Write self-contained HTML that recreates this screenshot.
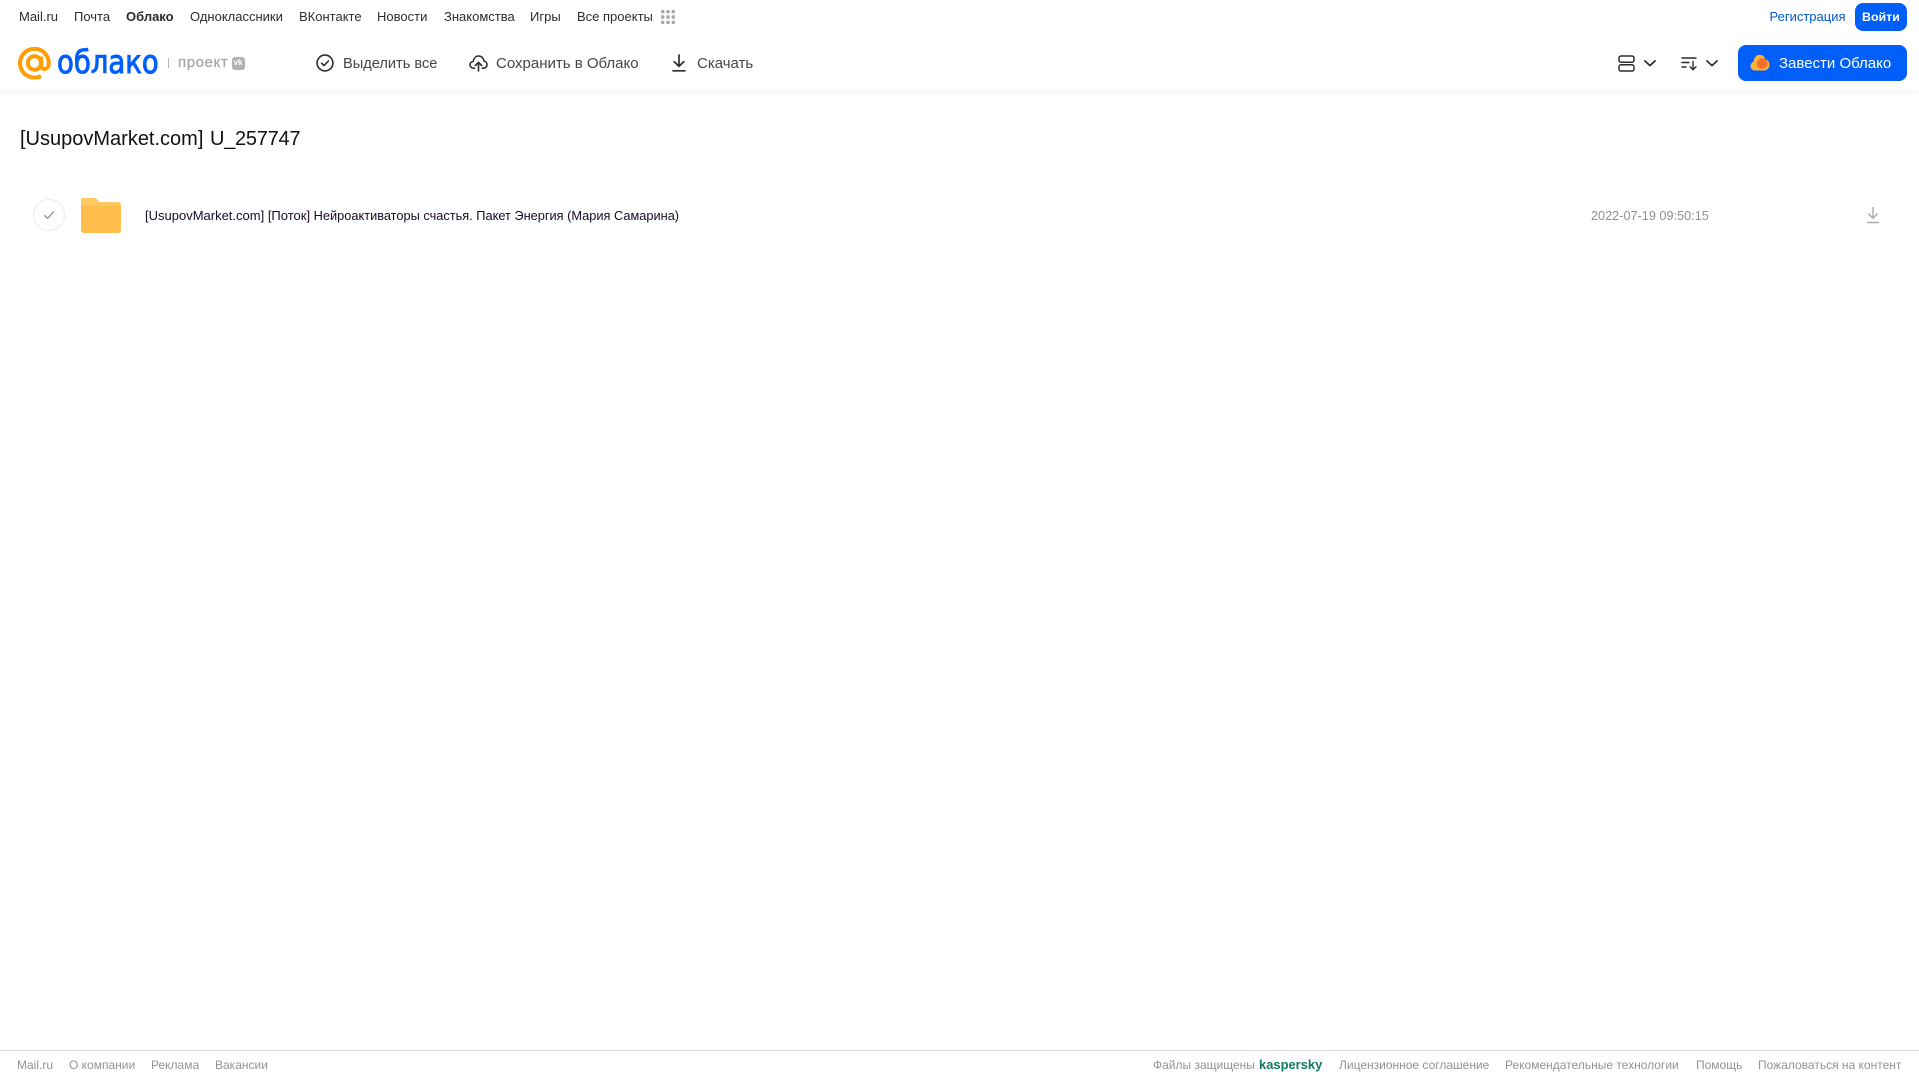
<!DOCTYPE html>
<html lang="ru">
<head>
<meta charset="utf-8">
<title>[UsupovMarket.com] U_257747</title>
<style>
html,body{margin:0;padding:0;background:#fff;width:1919px;height:1079px;overflow:hidden}
body{font-family:"Liberation Sans",Arial,sans-serif;position:relative}
.t{position:absolute;white-space:nowrap;line-height:20px}
.n{font-size:13px;color:#2c2d2e;top:7px}
.m{font-size:15px;color:#45464a;top:54px}
.f{font-size:12px;color:#919399;top:1055px}
svg{position:absolute;display:block}
#hd{position:absolute;left:0;top:0;width:1919px;height:90px;background:#fff;box-shadow:0 2px 6px rgba(0,0,0,.06)}
.btn{position:absolute;background:#005ff9;border-radius:8px}
</style>
</head>
<body>
<div id="hd"></div>

<span class="t n" style="left:19px">Mail.ru</span>
<span class="t n" style="left:74px">Почта</span>
<span class="t n" style="left:126px;font-weight:bold">Облако</span>
<span class="t n" style="left:190px">Одноклассники</span>
<span class="t n" style="left:299px">ВКонтакте</span>
<span class="t n" style="left:377px">Новости</span>
<span class="t n" style="left:444px">Знакомства</span>
<span class="t n" style="left:530px">Игры</span>
<span class="t n" style="left:577px">Все проекты</span>
<svg style="left:661px;top:10px" width="14" height="14" viewBox="0 0 14 14" fill="#a5a7ab">
<rect x="0" y="0" width="3.4" height="3.4" rx="1"/><rect x="5.3" y="0" width="3.4" height="3.4" rx="1"/><rect x="10.6" y="0" width="3.4" height="3.4" rx="1"/>
<rect x="0" y="5.3" width="3.4" height="3.4" rx="1"/><rect x="5.3" y="5.3" width="3.4" height="3.4" rx="1"/><rect x="10.6" y="5.3" width="3.4" height="3.4" rx="1"/>
<rect x="0" y="10.6" width="3.4" height="3.4" rx="1"/><rect x="5.3" y="10.6" width="3.4" height="3.4" rx="1"/><rect x="10.6" y="10.6" width="3.4" height="3.4" rx="1"/>
</svg>

<span class="t" style="left:1769.5px;top:7px;font-size:13px;color:#005bd1">Регистрация</span>
<div class="btn" style="left:1855px;top:3px;width:52px;height:28px"></div>
<span class="t" style="left:1862px;top:7px;font-size:12.4px;color:#fff;font-weight:bold">Войти</span>

<!-- logo -->
<svg style="left:18px;top:47px" width="33" height="33" viewBox="0 0 33 33" fill="none" stroke="#ff9e00" stroke-width="4">
<circle cx="16.5" cy="16" r="6.7"/>
<path d="M23.2 9.5V18.5c0 5 7.6 5 7.6-2.5A14.4 14.4 0 1 0 23 29"/>
</svg>
<span class="t" style="left:57px;top:45px;font-size:32px;line-height:34px;color:#005ff9;font-family:'DejaVu Sans',sans-serif;-webkit-text-stroke:1px #005ff9;transform-origin:0 50%;transform:scaleX(.86)">облако</span>
<div style="position:absolute;left:168px;top:58px;width:1px;height:10px;background:#b5b7bb"></div>
<span class="t" style="left:178px;top:53px;font-size:15px;color:#a5a7ab;-webkit-text-stroke:.3px #a5a7ab;letter-spacing:.6px">проект</span>
<div style="position:absolute;left:232px;top:57px;width:13px;height:13px;border-radius:3px;background:#b0b2b6"></div>
<span class="t" style="left:233.5px;top:53px;font-size:8px;color:#fff;font-weight:bold">vk</span>

<!-- action icons -->
<svg style="left:316px;top:54px" width="18" height="18" viewBox="0 0 18 18" fill="none" stroke="#2c2d2e" stroke-width="1.6">
<circle cx="9" cy="9" r="7.9"/><path d="M5.6 9.2l2.4 2.4 4.4-4.6" stroke-linecap="round" stroke-linejoin="round"/>
</svg>
<span class="t m" style="left:343px;font-size:14.6px">Выделить все</span>

<svg style="left:469px;top:54px" width="19" height="18" viewBox="0 0 19 18" fill="none" stroke="#2c2d2e" stroke-width="1.6" stroke-linecap="round" stroke-linejoin="round">
<path d="M5.5 14.2H4.6C2.6 14.2 1 12.7 1 10.8c0-1.8 1.4-3.2 3.2-3.4C4.8 4.2 6.9 2 9.6 2c2.8 0 5 2.1 5.3 4.9 1.8.4 3.1 1.9 3.1 3.7 0 2-1.6 3.6-3.6 3.6h-1"/>
<path d="M9.5 17V8.5M6.3 11.5l3.2-3.2 3.2 3.2"/>
</svg>
<span class="t m" style="left:496px">Сохранить в Облако</span>

<svg style="left:672px;top:54px" width="14" height="18" viewBox="0 0 14 18" fill="none" stroke="#2c2d2e" stroke-width="1.7" stroke-linecap="round" stroke-linejoin="round">
<path d="M7 1v11M2.2 7.6L7 12.4l4.8-4.8M1 16.8h12"/>
</svg>
<span class="t m" style="left:697px">Скачать</span>

<!-- view / sort -->
<svg style="left:1618px;top:55px" width="17" height="17" viewBox="0 0 17 17" fill="none" stroke="#2c2d2e" stroke-width="1.5">
<rect x="1" y="1" width="15" height="6.2" rx="2"/><rect x="1" y="9.8" width="15" height="6.2" rx="2"/>
</svg>
<svg style="left:1643px;top:59px" width="14" height="9" viewBox="0 0 14 9" fill="none" stroke="#2c2d2e" stroke-width="1.8" stroke-linecap="round" stroke-linejoin="round"><path d="M2 2l5 4.6L12 2"/></svg>
<svg style="left:1681px;top:56px" width="17" height="15" viewBox="0 0 17 15" fill="none" stroke="#2c2d2e" stroke-width="1.4" stroke-linecap="round" stroke-linejoin="round">
<path d="M1 2h14M1 6.5h7M1 11h4M12 5.5V13.5M9 10.8l3 3 3-3"/>
</svg>
<svg style="left:1705px;top:59px" width="14" height="9" viewBox="0 0 14 9" fill="none" stroke="#2c2d2e" stroke-width="1.8" stroke-linecap="round" stroke-linejoin="round"><path d="M2 2l5 4.6L12 2"/></svg>

<div class="btn" style="left:1738px;top:45px;width:169px;height:36px"></div>
<svg style="left:1750px;top:54px" width="20" height="17" viewBox="0 0 20 17">
<path d="M5 16.5C2.2 16.5 .5 14.5 .5 12c0-2 1.2-3.6 3-4.1C4 3.6 6.5 .8 9.5 .8c2.8 0 5 1.8 5.7 4.6 2.5.3 4.3 2.6 4.3 5.4 0 3.2-2.3 5.7-5.2 5.7z" fill="#ffb13b"/>
<circle cx="12.2" cy="9.6" r="5.3" fill="#f4702c"/>
</svg>
<span class="t" style="left:1779px;top:54px;font-size:15px;color:#fff">Завести Облако</span>

<!-- title -->
<span class="t" style="left:20px;top:125px;font-size:20px;line-height:28px;color:#111">[UsupovMarket.com] <span style="margin-left:1px;letter-spacing:-.25px">U_257747</span></span>

<!-- row -->
<div style="position:absolute;left:33px;top:199px;width:30px;height:30px;border:1px solid #ececee;border-radius:50%"></div>
<svg style="left:43px;top:210px" width="12" height="10" viewBox="0 0 12 10" fill="none" stroke="#8f9196" stroke-width="1.3" stroke-linecap="round" stroke-linejoin="round"><path d="M1.5 5.5L4.6 8.4 10.5 1.8"/></svg>
<svg style="left:81px;top:198px" width="40" height="35" viewBox="0 0 41 35" preserveAspectRatio="none">
<path d="M2 0h11c2 0 3 .8 4 2l1.8 2H38c1.700 0 3 1.300 3 3v25c0 1.700-1.300 3-3 3H3c-1.700 0-3-1.300-3-3V2c0-1.100.9-2 2-2z" fill="#ffbe4b"/>
<path d="M0 8V2c0-1.100.9-2 2-2h11c2 0 3 .8 4 2l1.8 2H38c1.700 0 3 1.300 3 3v1z" fill="#ffc860"/>
</svg>
<span class="t" style="left:145px;top:206px;font-size:13px;color:#1a0a28">[UsupovMarket.com] [Поток] <span style="font-size:12.79px">Нейроактиваторы счастья. Пакет Энергия (Мария Самарина)</span></span>
<span class="t" style="left:1591px;top:206px;font-size:12.7px;color:#8f9196">2022-07-19 09:50:15</span>
<svg style="left:1866px;top:206px" width="14" height="18" viewBox="0 0 14 18" fill="none" stroke="#a8aaae" stroke-width="1.4" stroke-linejoin="round">
<path d="M7 1v11M2.4 7.6L7 12.2l4.6-4.6M1 16.5h12"/>
</svg>

<!-- footer -->
<div style="position:absolute;left:0;top:1050px;width:1919px;height:1px;background:#d8d9db"></div>
<span class="t f" style="left:17px">Mail.ru</span>
<span class="t f" style="left:69px">О компании</span>
<span class="t f" style="left:151px">Реклама</span>
<span class="t f" style="left:215px">Вакансии</span>
<span class="t f" style="left:1153px">Файлы защищены</span>
<span class="t f" style="left:1259px;color:#0f7a63;font-weight:bold;font-size:12.95px">kaspersky</span>
<span class="t f" style="left:1339px">Лицензионное соглашение</span>
<span class="t f" style="left:1505px">Рекомендательные технологии</span>
<span class="t f" style="left:1696px">Помощь</span>
<span class="t f" style="left:1758px">Пожаловаться на контент</span>
</body>
</html>
